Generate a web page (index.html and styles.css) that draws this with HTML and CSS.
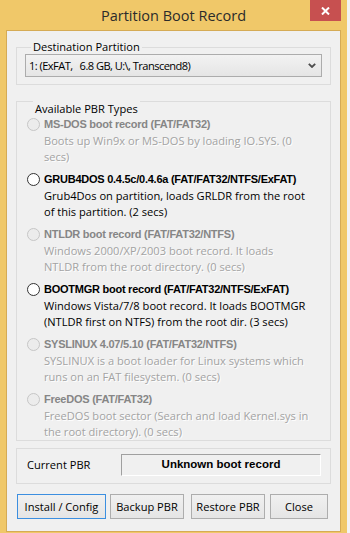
FILE: index.html
```html
<!DOCTYPE html>
<html lang="en">
<head>
<meta charset="utf-8">
<title>Partition Boot Record</title>
<link rel="stylesheet" href="styles.css">
</head>
<body>
<div class="screen">
  <div class="window">
    <div class="titlebar">
      <span class="spacer"></span>
      <span class="title">Partition Boot Record</span>
      <span class="tb-right">
        <span class="close-btn">
          <svg width="9" height="8" viewBox="0 0 9 8"><path d="M1 0.5 L8 7.5 M8 0.5 L1 7.5" stroke="#fff" stroke-width="2" fill="none"/></svg>
        </span>
      </span>
    </div>
    <div class="client">
      <div class="group dest">
        <div class="group-title">Destination Partition</div>
        <div class="select">
          <span class="select-text">1: (ExFAT,&nbsp;&nbsp; 6.8 GB, U:\, Transcend8)</span>
          <svg class="chevron" width="8" height="5" viewBox="0 0 8 5"><path d="M0.8 0.8 L4 4 L7.2 0.8" stroke="#4d4d4d" stroke-width="1.8" fill="none"/></svg>
        </div>
      </div>

      <div class="group types">
        <div class="group-title">Available PBR Types</div>
        <div class="option disabled">
          <span class="radio"></span>
          <div class="opt-text">
            <div class="opt-title">MS-DOS boot record (FAT/FAT32)</div>
            <div class="opt-desc">Boots up Win9x or MS-DOS by loading IO.SYS. (0<br>secs)</div>
          </div>
        </div>
        <div class="option">
          <span class="radio"></span>
          <div class="opt-text">
            <div class="opt-title">GRUB4DOS 0.4.5c/0.4.6a (FAT/FAT32/NTFS/ExFAT)</div>
            <div class="opt-desc">Grub4Dos on partition, loads GRLDR from the root<br>of this partition. (2 secs)</div>
          </div>
        </div>
        <div class="option disabled">
          <span class="radio"></span>
          <div class="opt-text">
            <div class="opt-title">NTLDR boot record (FAT/FAT32/NTFS)</div>
            <div class="opt-desc">Windows 2000/XP/2003 boot record. It loads<br>NTLDR from the root directory. (0 secs)</div>
          </div>
        </div>
        <div class="option">
          <span class="radio"></span>
          <div class="opt-text">
            <div class="opt-title">BOOTMGR boot record (FAT/FAT32/NTFS/ExFAT)</div>
            <div class="opt-desc">Windows Vista/7/8 boot record. It loads BOOTMGR<br>(NTLDR first on NTFS) from the root dir. (3 secs)</div>
          </div>
        </div>
        <div class="option disabled">
          <span class="radio"></span>
          <div class="opt-text">
            <div class="opt-title">SYSLINUX 4.07/5.10 (FAT/FAT32/NTFS)</div>
            <div class="opt-desc">SYSLINUX is a boot loader for Linux systems which<br>runs on an FAT filesystem. (0 secs)</div>
          </div>
        </div>
        <div class="option disabled">
          <span class="radio"></span>
          <div class="opt-text">
            <div class="opt-title">FreeDOS (FAT/FAT32)</div>
            <div class="opt-desc">FreeDOS boot sector (Search and load Kernel.sys in<br>the root directory). (0 secs)</div>
          </div>
        </div>
      </div>

      <div class="current">
        <span class="current-label">Current PBR</span>
        <div class="current-field">Unknown boot record</div>
      </div>

      <div class="buttons">
        <div class="btn btn-default b-install">Install / Config</div>
        <div class="btn b-backup">Backup PBR</div>
        <div class="btn b-restore">Restore PBR</div>
        <div class="btn b-close">Close</div>
      </div>
    </div>
  </div>
  <div class="edge"></div>
</div>
</body>
</html>
```

FILE: styles.css
```css
* { box-sizing: border-box; }
html, body { margin: 0; padding: 0; }
body {
  width: 350px;
  height: 533px;
  overflow: hidden;
  background: #ffffff;
  font-family: "Open Sans", "Noto Sans", sans-serif;
  font-size: 11.1px;
  color: #000;
}
.screen {
  display: flex;
  width: 350px;
  height: 533px;
}
.window {
  width: 347px;
  height: 533px;
  background: #f0c869;
  display: flex;
  flex-direction: column;
}
.edge {
  width: 3px;
  height: 533px;
  background: #f3f3f3;
}
.titlebar {
  height: 30px;
  display: grid;
  grid-template-columns: 1fr auto 1fr;
  align-items: start;
}
.title {
  font-family: "Open Sans", "Noto Sans", sans-serif;
  font-size: 14.5px;
  color: #2b2b2b;
  line-height: 31px;
  white-space: nowrap;
}
.tb-right {
  display: flex;
  justify-content: flex-end;
  padding-right: 6px;
}
.close-btn {
  width: 31px;
  height: 21px;
  background: #c75050;
  display: flex;
  align-items: center;
  justify-content: center;
  padding-top: 1px;
}
.client {
  margin: 0 6px;
  height: 502px;
  border: 1px solid #d5ab55;
  background: #f0f0f0;
  display: flex;
  flex-direction: column;
}
.group {
  border: 1px solid #dcdcdc;
  margin-left: 9px;
  margin-right: 9px;
}
.group-title {
  width: fit-content;
  margin: -9px 0 0 6px;
  padding: 0 2px;
  background: #f0f0f0;
  line-height: 15px;
  white-space: nowrap;
}
.dest {
  margin-top: 16px;
  padding: 0 8px 7px 8px;
}
.select {
  height: 23px;
  border: 1px solid #acacac;
  background: linear-gradient(#f2f2f2, #e5e5e5);
  display: flex;
  align-items: center;
  justify-content: space-between;
  padding: 0 5px 0 3px;
}
.select-text { white-space: nowrap; line-height: 21px; letter-spacing: -0.55px; }
.types {
  margin-top: 16px;
  padding: 8px 6px 0 10px;
}
.option {
  display: flex;
  align-items: flex-start;
  margin-bottom: 6px;
}
.option:last-child { margin-bottom: 0; }
.radio {
  flex: none;
  width: 13px;
  height: 13px;
  border-radius: 50%;
  border: 1px solid #333333;
  background: #ffffff;
  margin-top: 2px;
  margin-right: 4px;
}
.option.disabled .radio {
  border-color: #c6c6c6;
  background: #ececec;
}
.opt-title {
  font-family: "Liberation Sans", Arial, sans-serif;
  font-weight: bold;
  font-size: 11px;
  letter-spacing: -0.25px;
  line-height: 17px;
  white-space: nowrap;
}
.opt-desc {
  line-height: 16px;
  white-space: nowrap;
}
.option.disabled .opt-title { color: #868686; }
.option.disabled .opt-desc { color: #a3a3a3; text-shadow: 1px 1px 0 #ffffff; }

.current {
  margin: 7px 9px 0 9px;
  border: 1px solid #dcdcdc;
  padding: 5px 9px 7px 10px;
  display: flex;
  align-items: center;
  justify-content: space-between;
}
.current-label { line-height: 16px; }
.current-field {
  width: 200px;
  height: 22px;
  border-top: 1px solid #a0a0a0;
  border-left: 1px solid #a0a0a0;
  border-bottom: 1px solid #ffffff;
  border-right: 1px solid #ffffff;
  font-family: "Liberation Sans", Arial, sans-serif;
  font-weight: bold;
  font-size: 11.5px;
  text-align: center;
  line-height: 18px;
}
.buttons {
  display: flex;
  margin-top: 10px;
  padding-left: 10px;
}
.btn {
  height: 25px;
  border: 1px solid #adadad;
  background: linear-gradient(#f0f0f0, #e5e5e5);
  display: flex;
  align-items: center;
  justify-content: center;
  white-space: nowrap;
}
.btn-default { border-color: #3c8fe0; }
.b-install { width: 89px; }
.b-backup { width: 74px; margin-left: 4px; }
.b-restore { width: 74px; margin-left: 7px; }
.b-close { width: 58px; margin-left: 5px; }
```
